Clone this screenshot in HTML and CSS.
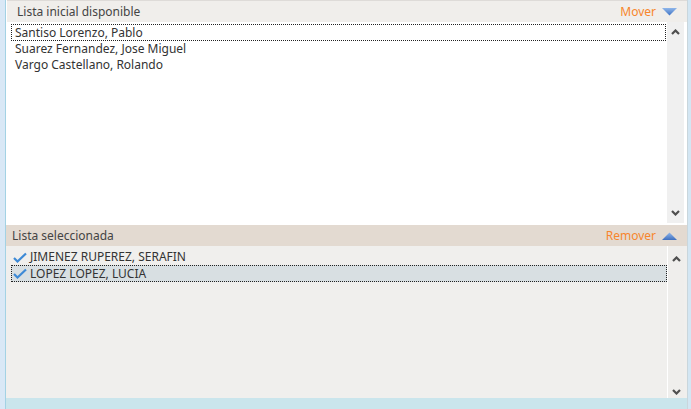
FILE: index.html
```html
<!DOCTYPE html>
<html lang="es">
	<head>
		<meta charset="UTF-8" />
		<meta name="viewport" content="width=device-width, initial-scale=1.0" />
		<title>Listas</title>
		<link rel="stylesheet" href="styles.css">
	</head>
	<body>
		<div class="frame">
			<div class="side"></div>
			<div class="main">
				<div class="panel panel-top">
					<div class="panel-header header-light">
						<span class="panel-title">Lista inicial disponible</span>
						<span class="panel-action">Mover
							<svg class="tri" width="15" height="8" viewBox="0 0 15 8">
								<defs>
									<linearGradient id="gdown" x1="0" y1="0" x2="0" y2="1">
										<stop offset="0" stop-color="#8fb6ea" />
										<stop offset="1" stop-color="#3f73c4" />
									</linearGradient>
								</defs>
								<polygon points="0,0 15,0 7.5,7.5" fill="url(#gdown)" />
							</svg>
						</span>
					</div>
					<div class="list list-white">
						<div class="items">
							<div class="item focus">Santiso Lorenzo, Pablo</div>
							<div class="item">Suarez Fernandez, Jose Miguel</div>
							<div class="item">Vargo Castellano, Rolando</div>
						</div>
						<div class="scroll">
							<svg width="9" height="6" viewBox="0 0 9 6"><polyline points="1,5 4.5,1.5 8,5" fill="none" stroke="#4f4f4f" stroke-width="2.2" /></svg>
							<svg width="9" height="6" viewBox="0 0 9 6"><polyline points="1,1 4.5,4.5 8,1" fill="none" stroke="#4f4f4f" stroke-width="2.2" /></svg>
						</div>
					</div>
				</div>
				<div class="panel panel-bottom">
					<div class="panel-header header-beige">
						<span class="panel-title sel">Lista seleccionada</span>
						<span class="panel-action">Remover
							<svg class="tri" width="15" height="8" viewBox="0 0 15 8">
								<defs>
									<linearGradient id="gup" x1="0" y1="0" x2="0" y2="1">
										<stop offset="0" stop-color="#8fb6ea" />
										<stop offset="1" stop-color="#3f6fbf" />
									</linearGradient>
								</defs>
								<polygon points="7.5,0.5 15,8 0,8" fill="url(#gup)" />
							</svg>
						</span>
					</div>
					<div class="list list-gray">
						<div class="items">
							<div class="item">
								<svg class="check" width="14" height="11" viewBox="0 0 14 11"><path d="M1 6 L4.5 9.5 L13 1.5" fill="none" stroke="#3d8ad6" stroke-width="2.2" /></svg>JIMENEZ RUPEREZ, SERAFIN
							</div>
							<div class="item focus picked">
								<svg class="check" width="14" height="11" viewBox="0 0 14 11"><path d="M1 6 L4.5 9.5 L13 1.5" fill="none" stroke="#3d8ad6" stroke-width="2.2" /></svg>LOPEZ LOPEZ, LUCIA
							</div>
						</div>
						<div class="scroll scroll-gray">
							<svg width="9" height="6" viewBox="0 0 9 6"><polyline points="1,5 4.5,1.5 8,5" fill="none" stroke="#4f4f4f" stroke-width="2.2" /></svg>
							<svg width="9" height="6" viewBox="0 0 9 6"><polyline points="1,1 4.5,4.5 8,1" fill="none" stroke="#4f4f4f" stroke-width="2.2" /></svg>
						</div>
					</div>
				</div>
				<div class="foot"></div>
			</div>
			<div class="edge"></div>
		</div>
	</body>
</html>
```

FILE: styles.css
```css
* {
	padding: 0;
	margin: 0;
	box-sizing: border-box;
}
body {
	font-family: "Noto Sans", "DejaVu Sans", sans-serif;
	font-size: 12px;
	color: #333;
	background-color: #cae5ec;
}
.frame {
	display: flex;
	width: 691px;
	height: 409px;
}
.side {
	width: 6px;
	background-color: #d9e8f6;
	border-right: 1px solid #a3d2e4;
}
.edge {
	width: 4px;
	background-color: #d3e6f3;
	border-left: 1px solid #c9d6dc;
}
.main {
	flex: 1;
	display: flex;
	flex-direction: column;
	background-color: #fff;
}
.panel-header {
	display: flex;
	align-items: center;
	justify-content: space-between;
	padding: 0 10px 0 6px;
}
.header-light {
	height: 22px;
	background-color: #f0eeeb;
	border-top: 1px solid #dedbd8;
	margin-left: 1px;
}
.header-beige {
	height: 21px;
	background-color: #e3dad1;
}
.panel-title {
	color: #444;
	padding-left: 4px;
}
.panel-title.sel {
	padding-left: 0;
}
.panel-action {
	display: flex;
	align-items: center;
	gap: 6px;
	color: #f7862d;
}
.list {
	display: flex;
}
.list-white {
	height: 203px;
	background-color: #fff;
	padding-left: 5px;
	padding-bottom: 2px;
}
.list-gray {
	height: 152px;
	background-color: #f0efed;
	padding-left: 5px;
}
.items {
	flex: 1;
	padding-top: 3px;
}
.item {
	height: 16px;
	line-height: 16px;
	padding-left: 3px;
	display: flex;
	align-items: center;
	border: 1px solid transparent;
}
.list-gray .item {
	padding-left: 1px;
}
.list-white .items {
	padding-top: 2px;
}
.item.focus {
	border: 1px dotted #222;
	height: 17px;
}
.item.picked {
	background-color: #d8dfe2;
}
.check {
	margin-right: 3px;
}
.scroll {
	width: 17px;
	margin-left: 1px;
	margin-right: 3px;
	background-color: #f0f0f0;
	display: flex;
	flex-direction: column;
	align-items: center;
	justify-content: space-between;
	padding: 7px 0 7px;
}
.scroll-gray {
	border-left: 1px solid #fff;
	margin-left: 0;
	margin-right: 3px;
	background-color: #efeeec;
	padding-top: 10px;
	padding-bottom: 3px;
}
.foot {
	flex: 1;
	background-color: #cae5ec;
}
```
